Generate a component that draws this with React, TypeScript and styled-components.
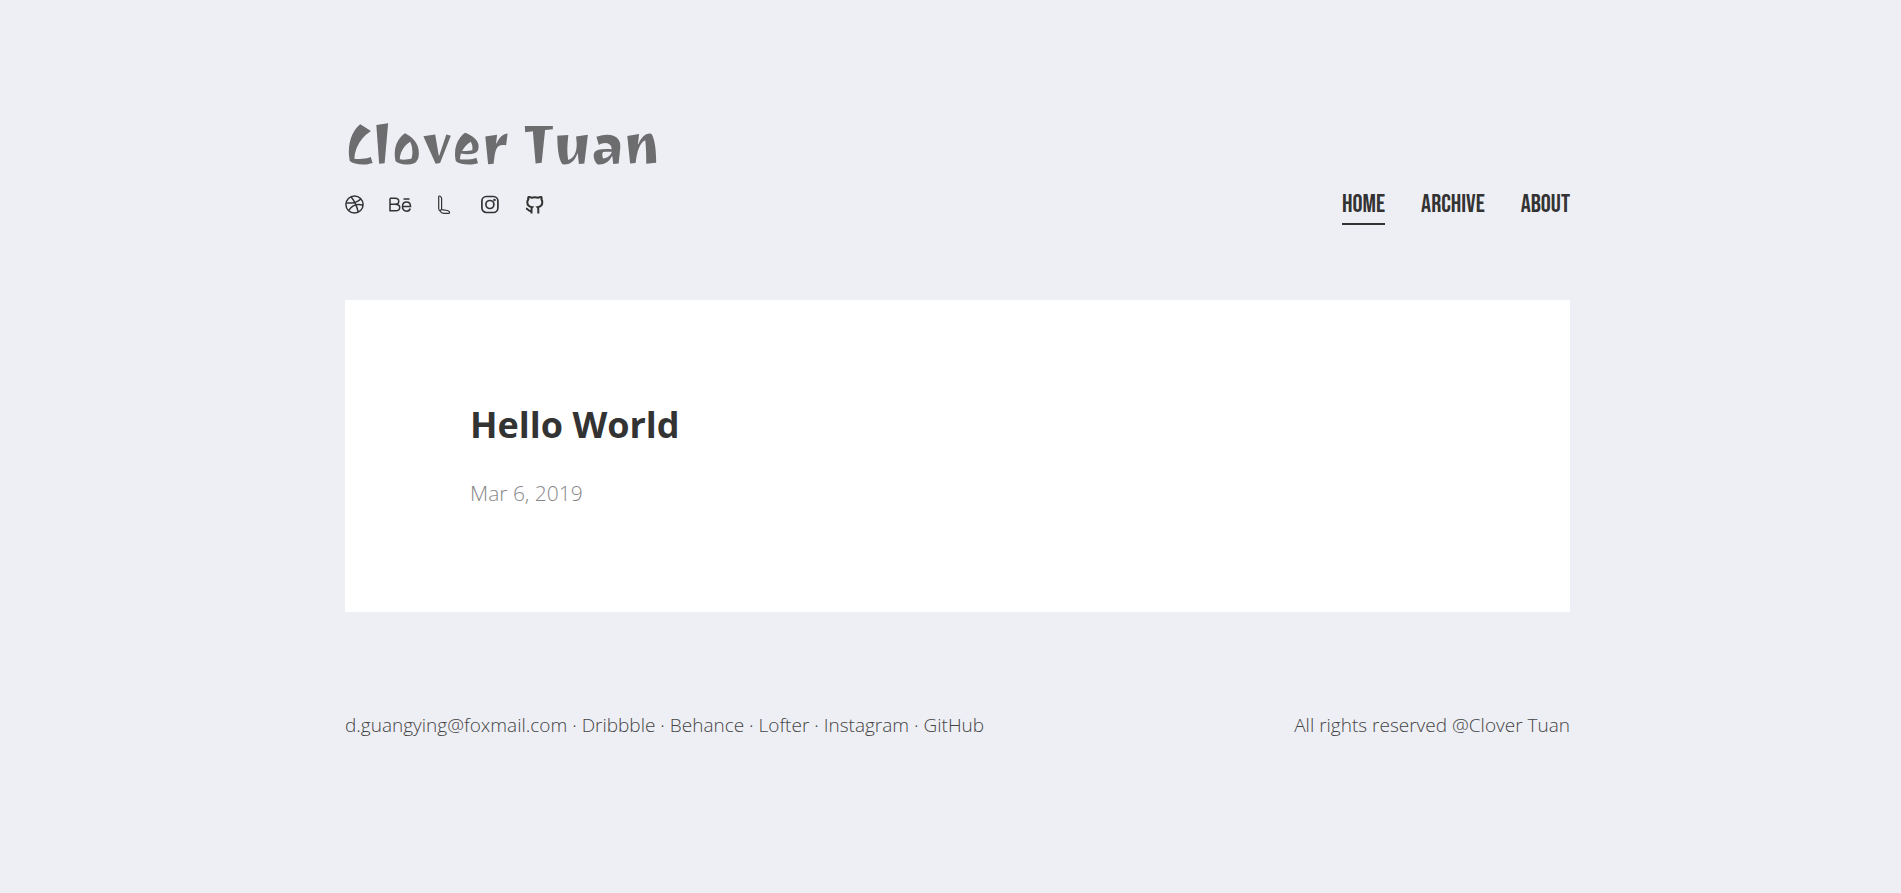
import React from "react";
import styled, { createGlobalStyle } from "styled-components";

const GlobalStyle = createGlobalStyle`
  *, *::before, *::after { box-sizing: border-box; }
  body {
    margin: 0;
    background: #eeeff5;
    color: #333;
    font-family: "Open Sans", "Noto Sans", sans-serif;
  }
  a { color: inherit; text-decoration: none; }
`;

const Page = styled.div`
  padding: 112px 16px 112px 30px;
`;

const Container = styled.div`
  max-width: 1225px;
  margin: 0 auto;
`;

const Header = styled.header`
  display: flex;
  flex-wrap: wrap;
  align-items: flex-end;
  justify-content: space-between;
  gap: 24px;
`;

const Brand = styled.div`
  display: flex;
  flex-direction: column;
  gap: 16px;
  padding-bottom: 8px;
`;

const Logo = styled.a`
  color: #6d6d6f;
  font: 55px/65px "Joti One", "Liberation Serif", serif;
  white-space: nowrap;
`;

const SocialList = styled.ul`
  display: flex;
  gap: 24px;
  margin: 0;
  padding: 0;
  list-style: none;
`;

const SocialLink = styled.a`
  display: block;
  height: 24px;

  svg {
    display: block;
    fill: none;
    stroke: currentColor;
  }
`;

const Nav = styled.nav`
  display: flex;
  gap: 36px;
`;

const NavLink = styled.a<{ $active?: boolean }>`
  padding-bottom: 3px;
  border-bottom: 2px solid ${(p) => (p.$active ? "#333" : "transparent")};
  font: 25px/30px "Bebas Neue", "Roboto Condensed", Roboto, sans-serif;
`;

const Post = styled.article`
  margin-top: 75px;
  padding: 97px 125px 101px;
  background: #fff;
`;

const PostTitle = styled.h2`
  margin: 0;
  font-size: 36px;
  line-height: 56px;
  font-weight: 700;
`;

const PostDate = styled.time`
  display: block;
  margin-top: 22px;
  color: #888;
  font-size: 21px;
  font-weight: 300;
  line-height: 36px;
`;

const Footer = styled.footer`
  display: flex;
  flex-wrap: wrap;
  justify-content: space-between;
  gap: 16px;
  margin-top: 96px;
  color: #444;
  font-size: 19px;
  font-weight: 300;
  line-height: 34px;
`;

const Line = styled.p`
  margin: 0;
`;

const DribbbleIcon = () => (
  <svg width="20" height="24" viewBox="0 0 20 24" strokeWidth="1.5">
    <circle cx="9.5" cy="11.5" r="8.6" />
    <path d="M1 10C7 10.500 13 9 16 5.700M6 3.700C9.500 8 12 13 13.200 19.200M3.600 17.700C7 12 12 10.500 18 12.200" />
  </svg>
);

const BehanceIcon = () => (
  <svg width="24" height="24" viewBox="0 0 24 24" strokeWidth="1.5">
    <path d="M1 5.200H6C11 5.200 11 11.200 6 11.200H1M6 11.200C12.500 11.200 12 17.800 6.500 17.800H1V5.200M13.500 13.500H21.500C21.500 7.500 13.500 7.500 13.500 13.500C13.500 19 20 19.500 21.200 15.500M14.500 6H20.500" />
  </svg>
);

const LofterIcon = () => (
  <svg width="20" height="24" viewBox="0 0 20 24" strokeWidth="1.2">
    <path d="M1.700 3.700C1.700 2.200 4.600 3.200 4.600 5.500V16L3 18C2 17.500 1.700 16.500 1.700 15.500ZM4.600 16.700L10.500 17.500C12.500 18 13.300 20.300 11.700 20.300H7C5 20.300 3.800 19.500 3 18" />
  </svg>
);

const InstagramIcon = () => (
  <svg width="20" height="24" viewBox="0 0 20 24" strokeWidth="1.7">
    <rect x="0.900" y="3.500" width="16" height="16" rx="4.500" />
    <circle cx="8.900" cy="11.500" r="4" />
    <circle cx="13.500" cy="7" r="0.500" />
  </svg>
);

const GitHubIcon = () => (
  <svg width="20" height="24" viewBox="0 0 20 24" strokeWidth="2">
    <path d="M13.300 20.500V16.300C13.300 15.300 13 14.700 12.600 14.300C16 13.800 17.300 12.100 17.300 9.300C17.300 8 17 7.100 16.500 6.500C16.900 5.300 16.700 4.600 16.300 3.900C14.800 3.900 13.500 4.500 13.200 4.700C11.200 4.200 8.500 4.200 6.600 4.700C6.300 4.500 5 3.900 3.500 3.900C3.100 4.600 2.900 5.300 3.300 6.500C2.700 7.100 2.300 8 2.300 9.300C2.300 12.100 3.800 13.800 7.200 14.300C6.800 14.700 6.500 15.300 6.500 16.300V20.500M6.500 18C3.500 18.700 3.400 15.800 1 15.500" />
  </svg>
);

const socials = [
  { name: "Dribbble", href: "https://dribbble.com", Icon: DribbbleIcon },
  { name: "Behance", href: "https://www.behance.net", Icon: BehanceIcon },
  { name: "Lofter", href: "https://www.lofter.com", Icon: LofterIcon },
  { name: "Instagram", href: "https://www.instagram.com", Icon: InstagramIcon },
  { name: "GitHub", href: "https://github.com", Icon: GitHubIcon },
];

export default function App() {
  return (
    <Page>
      <GlobalStyle />
      <Container>
        <Header>
          <Brand>
            <Logo href="#">Clover Tuan</Logo>
            <SocialList>
              {socials.map(({ name, href, Icon }) => (
                <li key={name}>
                  <SocialLink href={href} aria-label={name}>
                    <Icon />
                  </SocialLink>
                </li>
              ))}
            </SocialList>
          </Brand>
          <Nav>
            <NavLink href="#" $active aria-current="page">HOME</NavLink>
            <NavLink href="#archive">ARCHIVE</NavLink>
            <NavLink href="#about">ABOUT</NavLink>
          </Nav>
        </Header>
        <main>
          <Post>
            <PostTitle>
              <a href="#hello-world">Hello World</a>
            </PostTitle>
            <PostDate dateTime="2019-03-06">Mar 6, 2019</PostDate>
          </Post>
        </main>
        <Footer>
          <Line>
            <a href="mailto:d.guangying@foxmail.com">d.guangying@foxmail.com</a>
            {socials.map(({ name, href }) => (
              <React.Fragment key={name}>
                {" · "}
                <a href={href}>{name}</a>
              </React.Fragment>
            ))}
          </Line>
          <Line>All rights reserved @Clover Tuan</Line>
        </Footer>
      </Container>
    </Page>
  );
}
